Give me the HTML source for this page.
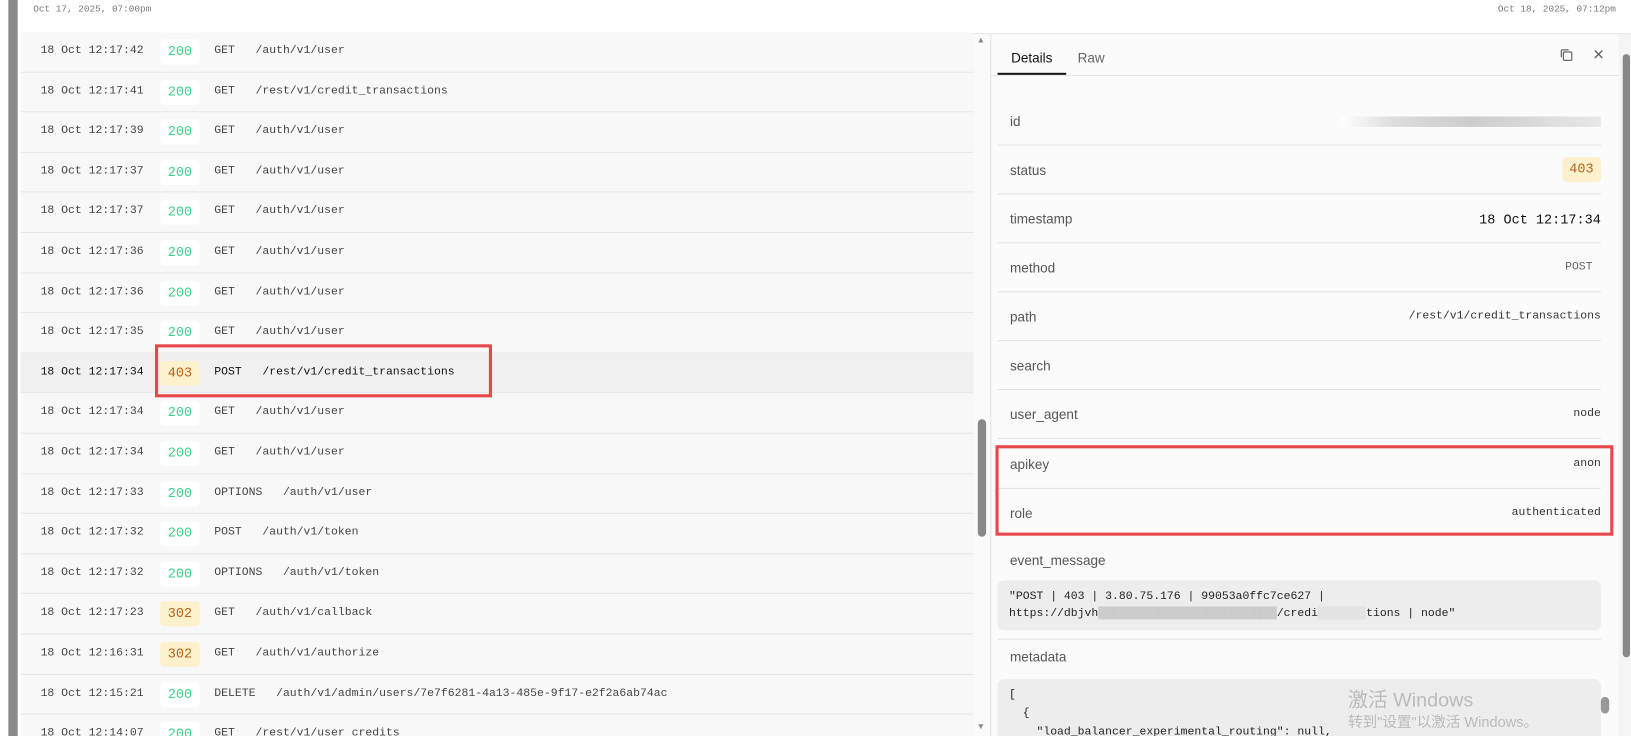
<!DOCTYPE html><html><head><style>
*{margin:0;padding:0;box-sizing:border-box}
html,body{width:1631px;height:736px;overflow:hidden;background:#fff}
body{font-family:"Liberation Sans",sans-serif;position:relative}
#w{position:absolute;left:0;top:0;width:1568px;height:708px;transform:scale(1.0402);transform-origin:0 0}
.mono{font-family:"Liberation Mono",monospace}
.abs{position:absolute}
.row{position:absolute;left:20px;width:916px;height:38.6px;border-bottom:1px solid #e6e6e6;background:#f8f8f8;font-family:"Liberation Mono",monospace;font-size:11px;color:#444}
.row .t{position:absolute;left:19px;top:12px}
.row .b{position:absolute;left:134px;top:7px;width:38px;height:24px;border-radius:4px;background:#fff;color:#3ecf8e;font-size:13px;text-align:center;line-height:24px}
.row .b.w{background:#fdf0cc;color:#b5651d}
.row .m{position:absolute;left:186px;top:12px;white-space:pre}
.dr{position:absolute;left:959px;width:580px;height:47px;border-bottom:1px solid #e3e3e3;font-size:13px;color:#555}
.dr .k{position:absolute;left:12px;top:16px}
.dr .v{position:absolute;right:0;top:17px;font-family:"Liberation Mono",monospace;font-size:11px;color:#333}
</style></head><body><div id="w">
<div class="abs" style="left:8px;top:0;width:9px;height:708px;background:#8a8a8a"></div>
<div class="abs mono" style="left:32px;top:4px;font-size:9px;color:#777">Oct 17, 2025, 07:00pm</div>
<div class="abs mono" style="left:1440px;top:4px;font-size:9px;color:#777">Oct 18, 2025, 07:12pm</div>
<div class="abs" style="left:20px;top:32px;width:1548px;height:1px;background:#e3e3e3"></div>
<div class="abs" style="left:20px;top:33px;width:916px;height:675px;background:#f8f8f8"></div>

<div class="row" style="top:31px"><span class="t">18 Oct 12:17:42</span><span class="b">200</span><span class="m">GET   /auth/v1/user</span></div>
<div class="row" style="top:69.6px"><span class="t">18 Oct 12:17:41</span><span class="b">200</span><span class="m">GET   /rest/v1/credit_transactions</span></div>
<div class="row" style="top:108.2px"><span class="t">18 Oct 12:17:39</span><span class="b">200</span><span class="m">GET   /auth/v1/user</span></div>
<div class="row" style="top:146.8px"><span class="t">18 Oct 12:17:37</span><span class="b">200</span><span class="m">GET   /auth/v1/user</span></div>
<div class="row" style="top:185.4px"><span class="t">18 Oct 12:17:37</span><span class="b">200</span><span class="m">GET   /auth/v1/user</span></div>
<div class="row" style="top:224px"><span class="t">18 Oct 12:17:36</span><span class="b">200</span><span class="m">GET   /auth/v1/user</span></div>
<div class="row" style="top:262.6px"><span class="t">18 Oct 12:17:36</span><span class="b">200</span><span class="m">GET   /auth/v1/user</span></div>
<div class="row" style="top:301.2px"><span class="t">18 Oct 12:17:35</span><span class="b">200</span><span class="m">GET   /auth/v1/user</span></div>
<div class="row" style="top:339.8px;background:#f0f0f0"><span class="t" style="color:#111">18 Oct 12:17:34</span><span class="b w">403</span><span class="m" style="color:#111">POST   /rest/v1/credit_transactions</span></div>
<div class="row" style="top:378.4px"><span class="t">18 Oct 12:17:34</span><span class="b">200</span><span class="m">GET   /auth/v1/user</span></div>
<div class="row" style="top:417px"><span class="t">18 Oct 12:17:34</span><span class="b">200</span><span class="m">GET   /auth/v1/user</span></div>
<div class="row" style="top:455.6px"><span class="t">18 Oct 12:17:33</span><span class="b">200</span><span class="m">OPTIONS   /auth/v1/user</span></div>
<div class="row" style="top:494.2px"><span class="t">18 Oct 12:17:32</span><span class="b">200</span><span class="m">POST   /auth/v1/token</span></div>
<div class="row" style="top:532.8px"><span class="t">18 Oct 12:17:32</span><span class="b">200</span><span class="m">OPTIONS   /auth/v1/token</span></div>
<div class="row" style="top:571.4px"><span class="t">18 Oct 12:17:23</span><span class="b w">302</span><span class="m">GET   /auth/v1/callback</span></div>
<div class="row" style="top:610px"><span class="t">18 Oct 12:16:31</span><span class="b w">302</span><span class="m">GET   /auth/v1/authorize</span></div>
<div class="row" style="top:648.6px"><span class="t">18 Oct 12:15:21</span><span class="b">200</span><span class="m">DELETE   /auth/v1/admin/users/7e7f6281-4a13-485e-9f17-e2f2a6ab74ac</span></div>
<div class="row" style="top:687.2px"><span class="t">18 Oct 12:14:07</span><span class="b">200</span><span class="m">GET   /rest/v1/user_credits</span></div>
<div class="abs" style="left:149px;top:331px;width:324px;height:51px;border:3px solid #e8484a"></div>

<div class="abs" style="left:936px;top:33px;width:16px;height:675px;background:#fafafa"></div>
<div class="abs" style="left:940px;top:403px;width:8px;height:113px;background:#888;border-radius:4px"></div>
<div class="abs" style="left:939px;top:34px;font-size:8px;color:#888">▲</div>
<div class="abs" style="left:939px;top:694px;font-size:8px;color:#888">▼</div>

<div class="abs" style="left:952px;top:33px;width:604px;height:675px;background:#fbfbfb;border-left:1px solid #e3e3e3"></div>
<div class="abs" style="left:972px;top:48px;font-size:13px;color:#111">Details</div>
<div class="abs" style="left:1036px;top:48px;font-size:13px;color:#666">Raw</div>
<div class="abs" style="left:959px;top:70px;width:66px;height:2px;background:#111"></div>
<div class="abs" style="left:952px;top:72px;width:604px;height:1px;background:#e3e3e3"></div>
<svg class="abs" style="left:1499px;top:46px" width="14" height="14" viewBox="0 0 14 14" fill="none" stroke="#666" stroke-width="1.2"><rect x="4" y="4" width="8" height="8" rx="1"/><path d="M2 9V3a1 1 0 0 1 1-1h6"/></svg>
<div class="abs" style="left:1531px;top:44px;font-size:14px;color:#666">✕</div>

<div class="dr" style="top:93px"><span class="k">id</span><span class="v" style="width:250px;height:10px;top:19px;background:linear-gradient(90deg,#fff,#ddd 20%,#ccc 50%,#ddd 80%,#e8e8e8)"></span></div>
<div class="dr" style="top:140px"><span class="k">status</span><span class="v" style="top:11px;background:#fdf0cc;color:#b5651d;padding:0 7px;height:24px;line-height:24px;border-radius:4px;font-size:13px">403</span></div>
<div class="dr" style="top:187px"><span class="k">timestamp</span><span class="v" style="font-size:13px;color:#111">18 Oct 12:17:34</span></div>
<div class="dr" style="top:234px"><span class="k">method</span><span class="v" style="right:8px;color:#666">POST</span></div>
<div class="dr" style="top:281px"><span class="k">path</span><span class="v">/rest/v1/credit_transactions</span></div>
<div class="dr" style="top:328px"><span class="k">search</span></div>
<div class="dr" style="top:375px"><span class="k">user_agent</span><span class="v">node</span></div>
<div class="dr" style="top:423px"><span class="k">apikey</span><span class="v">anon</span></div>
<div class="dr" style="top:470px;border-bottom:none"><span class="k">role</span><span class="v">authenticated</span></div>
<div class="abs" style="left:957px;top:428px;width:594px;height:87px;border:3px solid #e8484a"></div>
<div class="abs" style="left:971px;top:531px;font-size:13px;color:#555">event_message</div>
<div class="abs mono" style="left:959px;top:558px;width:580px;height:48px;background:#ededed;border-radius:6px;padding:8px 11px;font-size:11px;line-height:16px;color:#222">"POST | 403 | 3.80.75.176 | 99053a0ffc7ce627 |<br>https://dbjvh<span style="color:#ccc">██████████████████████████</span>/credi<span style="color:#e3e3e3">███████</span>tions | node"</div>
<div class="abs" style="left:959px;top:614px;width:580px;height:1px;background:#e3e3e3"></div>
<div class="abs" style="left:971px;top:624px;font-size:13px;color:#555">metadata</div>
<div class="abs mono" style="left:959px;top:653px;width:580px;height:60px;background:#ededed;border-radius:6px;padding:6px 11px;font-size:11px;line-height:18px;color:#222;white-space:pre">[
  {
    "load_balancer_experimental_routing": null,</div>
<div class="abs" style="left:1296px;top:658px;font-size:19px;color:#bbb;font-family:'Liberation Sans','Noto Sans CJK SC',sans-serif">激活 Windows</div>
<div class="abs" style="left:1296px;top:684px;font-size:14px;color:#bbb;font-family:'Liberation Sans','Noto Sans CJK SC',sans-serif">转到"设置"以激活 Windows。</div>
<div class="abs" style="left:1539px;top:670px;width:8px;height:16px;background:#999;border-radius:4px"></div>
<div class="abs" style="left:1556px;top:33px;width:12px;height:675px;background:#f5f5f5"></div>
<div class="abs" style="left:1560px;top:52px;width:7px;height:580px;background:#888;border-radius:4px"></div>
</div></body></html>
